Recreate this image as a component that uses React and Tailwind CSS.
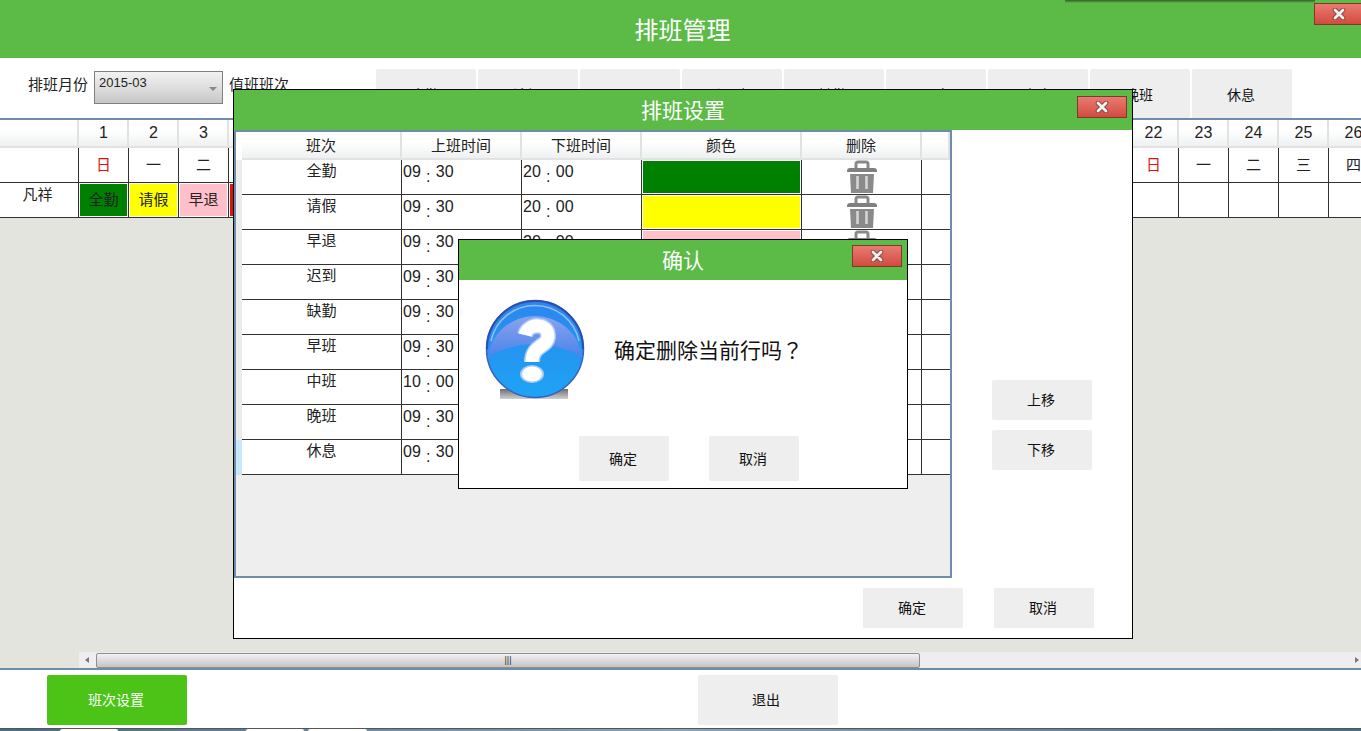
const days = Array.from({ length: 28 }, (_, i) => i + 1);
const weekNames = ['日', '一', '二', '三', '四', '五', '六'];

const shifts = [
  { name: '全勤', start: '09', startMin: '30', color: 'bg-[#008000]' },
  { name: '请假', start: '09', startMin: '30', color: 'bg-[#ffff00]' },
  { name: '早退', start: '09', startMin: '30', color: 'bg-[#ffc0cb]' },
  { name: '迟到', start: '09', startMin: '30', color: 'bg-[#ff0000]' },
  { name: '缺勤', start: '09', startMin: '30', color: 'bg-[#808080]' },
  { name: '早班', start: '09', startMin: '30', color: 'bg-[#00bfff]' },
  { name: '中班', start: '10', startMin: '00', color: 'bg-[#ffa500]' },
  { name: '晚班', start: '09', startMin: '30', color: 'bg-[#800080]' },
  { name: '休息', start: '09', startMin: '30', color: 'bg-[#ffffff]' },
];

const assigned = [
  { name: '全勤', color: 'bg-[#008000]' },
  { name: '请假', color: 'bg-[#ffff00]' },
  { name: '早退', color: 'bg-[#ffc0cb]' },
  { name: '迟到', color: 'bg-[#e01010]' },
];

function CloseButton({ className }) {
  return (
    <button className={`flex h-[22px] w-[50px] items-center justify-center border border-[#7d3a28] bg-gradient-to-b from-[#ea7a72] to-[#d24a3e] ${className}`}>
      <svg width="14" height="12" viewBox="0 0 14 12">
        <path d="M3 2 L11 10 M11 2 L3 10" stroke="#8a4640" strokeWidth="4.6" strokeLinecap="round" />
        <path d="M3 2 L11 10 M11 2 L3 10" stroke="#f2f2f2" strokeWidth="2.8" strokeLinecap="round" />
      </svg>
    </button>
  );
}

function GrayButton({ children, className }) {
  return (
    <button className={`flex items-center justify-center rounded-[2px] bg-[#eeeeee] pt-[1px] pr-[2px] text-[14px] text-[#111] ${className}`}>
      {children}
    </button>
  );
}

function TrashIcon() {
  return (
    <svg width="32" height="34" viewBox="0 0 32 34" className="block">
      <path d="M10 8 V4 Q10 2 12 2 H20 Q22 2 22 4 V8" fill="none" stroke="#8a8a8a" strokeWidth="3" />
      <path d="M1 11 Q1 8 4 8 H28 Q31 8 31 11 V12 H1 Z" fill="#808080" />
      <path d="M4 14 H28 L27 33 H5 Z" fill="#8a8a8a" />
      <path d="M11.5 16 V29 M20.5 16 V29" stroke="#d4d4d4" strokeWidth="2.6" />
    </svg>
  );
}

function QuestionIcon() {
  return (
    <svg width="100" height="102" viewBox="0 0 100 102" className="block">
      <defs>
        <linearGradient id="ballBottom" x1="0" y1="0" x2="0" y2="1">
          <stop offset="0" stopColor="#2a86ee" />
          <stop offset="1" stopColor="#1ea4f4" />
        </linearGradient>
        <linearGradient id="ballTop" x1="0" y1="0" x2="0" y2="1">
          <stop offset="0" stopColor="#8ba3ee" />
          <stop offset="1" stopColor="#4a84ea" />
        </linearGradient>
        <linearGradient id="ballShadow" x1="0" y1="0" x2="0" y2="1">
          <stop offset="0" stopColor="#6f6f6f" />
          <stop offset="1" stopColor="#d0d0d0" />
        </linearGradient>
      </defs>
      <rect x="15" y="90" width="68" height="10" fill="url(#ballShadow)" />
      <circle cx="50" cy="50" r="48.5" fill="url(#ballBottom)" stroke="#3a5fc0" strokeWidth="1.5" />
      <path d="M2.5 58 A48 48 0 0 1 97.5 58 Q50 32 2.5 58 Z" fill="url(#ballTop)" />
      <path d="M6 42 A45 45 0 0 1 94 42" fill="none" stroke="#c4d2f6" strokeWidth="1.5" opacity="0.7" />
      <path d="M2 50 A48 48 0 0 1 98 50" fill="none" stroke="#2e4fb0" strokeWidth="2" />
      <path d="M40 36 C43 24 64 23 63 38 C62 48 47 46 47 63" fill="none" stroke="#a9cdf6" strokeWidth="16" />
      <ellipse cx="47" cy="75" rx="12" ry="9" fill="#a9cdf6" />
      <path d="M40 36 C43 24 64 23 63 38 C62 48 47 46 47 63" fill="none" stroke="#fff" strokeWidth="13" />
      <ellipse cx="47" cy="75" rx="10" ry="7.5" fill="#fff" />
    </svg>
  );
}

function HeaderCell({ children, className }) {
  return (
    <div className={`flex items-end justify-center border-r-2 border-b-2 border-[#e2e2e2] bg-gradient-to-b from-white from-40% to-[#eef0f1] pb-[1px] ${className}`}>
      {children}
    </div>
  );
}

function TimeCell({ hour, min }) {
  return (
    <div className="flex w-[120px] shrink-0 items-start border-r border-[#333] pt-[2px] pl-[1px] text-[16px] leading-5 text-[#222]">
      <span>{hour}</span>
      <span className="w-[15px] pt-[5px] text-center leading-5">:</span>
      <span>{min}</span>
    </div>
  );
}

function ScheduleGrid() {
  return (
    <div className="overflow-hidden border-t-2 border-[#6e8cab] text-[15px] text-[#222]">
      <div className="flex h-[28px] text-[16px]">
        <HeaderCell className="w-[79px] shrink-0" />
        {days.map((d) => (
          <HeaderCell key={d} className="w-[50px] shrink-0 pl-[1px]">{d}</HeaderCell>
        ))}
      </div>
      <div className="flex h-[35px] bg-white">
        <div className="w-[79px] shrink-0 border-r border-b border-[#333]" />
        {days.map((d) => {
          const name = weekNames[(d - 1) % 7];
          return (
            <div key={d} className={`flex w-[50px] shrink-0 items-center justify-center border-r border-b border-[#333] ${name === '日' ? 'text-[#e01010]' : ''}`}>
              {name}
            </div>
          );
        })}
      </div>
      <div className="flex h-[35px] bg-white">
        <div className="flex w-[79px] shrink-0 justify-center border-r border-b border-[#333] pt-[1px] pr-[3px]">凡祥</div>
        {days.map((d, i) => (
          <div key={d} className="w-[50px] shrink-0 border-r border-b border-[#333] p-[1px]">
            {assigned[i] && (
              <div className={`flex h-full items-center justify-center pt-[1px] ${assigned[i].color}`}>{assigned[i].name}</div>
            )}
          </div>
        ))}
      </div>
    </div>
  );
}

function ShiftTable() {
  return (
    <div className="h-[448px] w-[718px] overflow-hidden border-[2.5px] border-[#6e8cab] bg-[#eeeeee] text-[15px] text-[#222]">
      <div className="flex h-[28px]">
        <div className="w-[6px] shrink-0 bg-white" />
        <HeaderCell className="w-[160px] shrink-0">班次</HeaderCell>
        <HeaderCell className="w-[120px] shrink-0">上班时间</HeaderCell>
        <HeaderCell className="w-[120px] shrink-0">下班时间</HeaderCell>
        <HeaderCell className="w-[160px] shrink-0">颜色</HeaderCell>
        <HeaderCell className="w-[120px] shrink-0">删除</HeaderCell>
        <HeaderCell className="flex-1" />
      </div>
      {shifts.map((s, i) => (
        <div key={s.name} className="flex h-[35px]">
          <div className={`w-[6px] shrink-0 ${i === shifts.length - 1 ? 'bg-[#c8e8fa]' : 'bg-[#ececec]'}`} />
          <div className="flex flex-1 border-b border-[#333] bg-white">
            <div className="flex w-[160px] shrink-0 justify-center border-r border-[#333] pt-[1px] leading-5">{s.name}</div>
            <TimeCell hour={s.start} min={s.startMin} />
            <TimeCell hour="20" min="00" />
            <div className="w-[160px] shrink-0 border-r border-[#333] p-[1px]">
              <div className={`h-full ${s.color}`} />
            </div>
            <div className="flex w-[120px] shrink-0 justify-center overflow-hidden border-r border-[#333]">
              <TrashIcon />
            </div>
            <div className="flex-1" />
          </div>
        </div>
      ))}
    </div>
  );
}

export default function App() {
  return (
    <div
      className="relative flex h-[731px] w-[1361px] flex-col overflow-hidden bg-white"
      style={{ fontFamily: '"Liberation Sans", "Noto Sans CJK SC", sans-serif' }}
    >
      <header className="flex h-[58px] shrink-0 items-center justify-center bg-[#5cbb46] pt-[3px] pl-[4px] text-[24px] text-white">
        排班管理
      </header>
      <div className="absolute top-0 left-[1065px] h-[3px] w-[250px] bg-gradient-to-b from-[#3a5a30] to-[#5cbb46]" />
      <CloseButton className="absolute top-[3px] left-[1314px]" />

      <div className="flex h-[60px] shrink-0 text-[15px] text-[#222]">
        <span className="mt-[17px] ml-[28px] leading-5">排班月份</span>
        <div className="mt-[13px] ml-[6px] flex h-[33px] w-[129px] justify-between border border-[#808080] bg-gradient-to-b from-[#f2f2f2] via-[#dedede] to-[#c6c6c6] pt-[3px] pr-[5px] pl-[4px] text-[13px] leading-4">
          <span>2015-03</span>
          <span className="mt-[12px] h-0 w-0 border-x-[4px] border-t-[4px] border-x-transparent border-t-[#888]" />
        </div>
        <span className="mt-[17px] ml-[6px] leading-5">值班班次</span>
        <div className="mt-[11px] ml-[87px] flex gap-[2px]">
          {shifts.map((s) => (
            <GrayButton key={s.name} className="h-[49px] w-[100px] rounded-b-none pt-[4px]">{s.name}</GrayButton>
          ))}
        </div>
      </div>

      <ScheduleGrid />

      <div className="flex flex-1 flex-col justify-end bg-[#e4e4de]">
        <div className="ml-[79px] flex h-[16px] items-center bg-[#eeeeee] pr-[2px]">
          <span className="ml-[6px] h-0 w-0 border-y-[3px] border-r-[4px] border-y-transparent border-r-[#777]" />
          <div className="ml-[7px] flex h-[15px] w-[824px] items-center justify-center rounded-[2px] border border-[#8f8f8f] bg-gradient-to-b from-[#f2f2f2] to-[#c4c4c4] text-[9px] leading-none text-[#333]">
            |||
          </div>
          <span className="ml-auto h-0 w-0 border-y-[3px] border-l-[4px] border-y-transparent border-l-[#777]" />
        </div>
      </div>

      <footer className="flex h-[60px] shrink-0 items-start border-t-2 border-[#6e8cab] bg-white pt-[5px]">
        <button className="ml-[47px] h-[50px] w-[140px] rounded-[2px] bg-[#4cc417] pt-[1px] pr-[2px] text-[14px] text-white">班次设置</button>
        <GrayButton className="ml-[511px] h-[50px] w-[140px] pr-[4px]">退出</GrayButton>
      </footer>
      <div className="flex h-[3px] shrink-0 border-t border-[#555] bg-gradient-to-r from-[#4a6a80] via-[#8aa6b8] to-[#4a6a80]">
        <div className="ml-[60px] w-[58px] rounded-t-[2px] bg-white" />
        <div className="ml-[128px] w-[58px] rounded-t-[2px] bg-white" />
        <div className="ml-[4px] w-[59px] rounded-t-[2px] bg-white" />
      </div>

      {/* 排班设置 window */}
      <div className="absolute top-[89px] left-[233px] flex h-[550px] w-[900px] flex-col border border-black bg-white">
        <div className="flex h-[40px] shrink-0 items-center justify-center bg-[#5cbb46] pt-[2px] text-[21px] text-white">排班设置</div>
        <CloseButton className="absolute top-[6px] right-[5px]" />
        <div className="flex">
          <ShiftTable />
          <div className="ml-[40px] flex flex-col gap-[10px] pt-[250px]">
            <GrayButton className="h-[40px] w-[100px]">上移</GrayButton>
            <GrayButton className="h-[40px] w-[100px]">下移</GrayButton>
          </div>
        </div>
        <div className="mt-[10px] ml-[629px] flex gap-[31px]">
          <GrayButton className="h-[40px] w-[100px]">确定</GrayButton>
          <GrayButton className="h-[40px] w-[100px]">取消</GrayButton>
        </div>
      </div>

      {/* 确认 dialog */}
      <div className="absolute top-[239px] left-[458px] flex h-[250px] w-[450px] flex-col border border-black bg-white">
        <div className="flex h-[40px] shrink-0 items-center justify-center bg-[#5cbb46] pt-[2px] text-[21px] text-white">确认</div>
        <CloseButton className="absolute top-[5px] right-[5px]" />
        <div className="mt-[19px] ml-[26px] flex items-center">
          <QuestionIcon />
          <span className="ml-[29px] text-[21px] text-[#111]">
            确定删除当前行吗<span className="font-['Noto_Sans_CJK_TC']">？</span>
          </span>
        </div>
        <div className="mt-[35px] ml-[120px] flex gap-[40px]">
          <GrayButton className="h-[45px] w-[90px]">确定</GrayButton>
          <GrayButton className="h-[45px] w-[90px]">取消</GrayButton>
        </div>
      </div>
    </div>
  );
}
